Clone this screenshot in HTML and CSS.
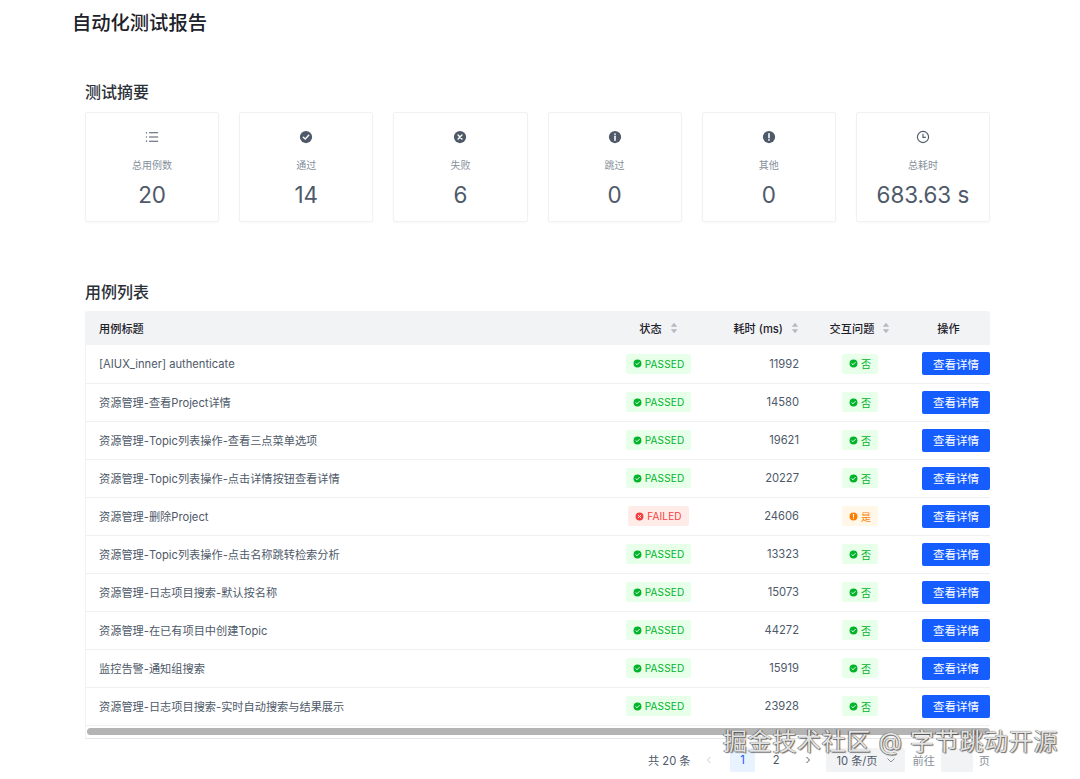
FILE: index.html
```html
<!DOCTYPE html>
<html lang="zh">
<head>
<meta charset="utf-8">
<title>自动化测试报告</title>
<link rel="stylesheet" href="styles.css">
</head>
<body>
<svg class="defs" width="0" height="0" aria-hidden="true">
  <symbol id="i-pass" viewBox="0 0 16 16"><circle cx="8" cy="8" r="7" fill="currentColor"/><path d="M4.9 8.2 7.1 10.3 11.1 6.1" fill="none" stroke="#fff" stroke-width="1.6" stroke-linecap="round" stroke-linejoin="round"/></symbol>
  <symbol id="i-fail" viewBox="0 0 16 16"><circle cx="8" cy="8" r="7" fill="currentColor"/><path d="M5.8 5.8 10.2 10.2M10.2 5.8 5.8 10.2" fill="none" stroke="#fff" stroke-width="1.6" stroke-linecap="round"/></symbol>
  <symbol id="i-warn" viewBox="0 0 16 16"><circle cx="8" cy="8" r="7" fill="currentColor"/><path d="M8 4.2V8.8" fill="none" stroke="#fff" stroke-width="1.8" stroke-linecap="round"/><circle cx="8" cy="11.3" r="1" fill="#fff"/></symbol>
  <symbol id="i-info" viewBox="0 0 16 16"><circle cx="8" cy="8" r="7" fill="currentColor"/><path d="M8 7.2V11.6" fill="none" stroke="#fff" stroke-width="1.8" stroke-linecap="round"/><circle cx="8" cy="4.7" r="1" fill="#fff"/></symbol>
  <symbol id="i-list" viewBox="0 0 16 16"><path d="M4.6 3.2H15M4.6 8H15M4.6 12.8H15" fill="none" stroke="currentColor" stroke-width="1.2"/><path d="M1 3.2H2.4M1 8H2.4M1 12.8H2.4" fill="none" stroke="currentColor" stroke-width="1.4"/></symbol>
  <symbol id="i-clock" viewBox="0 0 16 16"><circle cx="8" cy="8" r="6.4" fill="none" stroke="currentColor" stroke-width="1.3"/><path d="M8 4.4V8.4H11.2" fill="none" stroke="currentColor" stroke-width="1.3"/></symbol>
  <symbol id="i-sort" viewBox="0 0 8 12"><path d="M4 .8 7.2 4.8H.8ZM4 11.2 .8 7.2H7.2Z" fill="currentColor"/></symbol>
</svg>

<main class="page">
  <h1 class="page-title">自动化测试报告</h1>

  <section class="section summary">
    <h2 class="section-title">测试摘要</h2>
    <div class="cards">
      <div class="card"><svg class="card-icon"><use href="#i-list"/></svg><div class="card-label">总用例数</div><div class="card-value">20</div></div>
      <div class="card"><svg class="card-icon"><use href="#i-pass"/></svg><div class="card-label">通过</div><div class="card-value">14</div></div>
      <div class="card"><svg class="card-icon"><use href="#i-fail"/></svg><div class="card-label">失败</div><div class="card-value">6</div></div>
      <div class="card"><svg class="card-icon"><use href="#i-info"/></svg><div class="card-label">跳过</div><div class="card-value">0</div></div>
      <div class="card"><svg class="card-icon"><use href="#i-warn"/></svg><div class="card-label">其他</div><div class="card-value">0</div></div>
      <div class="card"><svg class="card-icon"><use href="#i-clock"/></svg><div class="card-label">总耗时</div><div class="card-value">683.63 s</div></div>
    </div>
  </section>

  <section class="section cases">
    <h2 class="section-title">用例列表</h2>
    <div class="table-wrap">
      <table class="table">
        <colgroup><col class="c-title"><col class="c-status"><col class="c-time"><col class="c-inter"><col class="c-op"></colgroup>
        <thead>
          <tr>
            <th class="left">用例标题</th>
            <th><span class="th-in">状态<svg class="sort"><use href="#i-sort"/></svg></span></th>
            <th class="right"><span class="th-in">耗时 (ms)<svg class="sort"><use href="#i-sort"/></svg></span></th>
            <th><span class="th-in">交互问题<svg class="sort"><use href="#i-sort"/></svg></span></th>
            <th>操作</th>
          </tr>
        </thead>
        <tbody>
          <tr><td class="left">[AIUX_inner] authenticate</td><td><span class="tag ok"><svg class="tag-icon"><use href="#i-pass"/></svg>PASSED</span></td><td class="right">11992</td><td><span class="tag ok"><svg class="tag-icon"><use href="#i-pass"/></svg>否</span></td><td class="op"><button class="btn">查看详情</button></td></tr>
          <tr><td class="left">资源管理-查看Project详情</td><td><span class="tag ok"><svg class="tag-icon"><use href="#i-pass"/></svg>PASSED</span></td><td class="right">14580</td><td><span class="tag ok"><svg class="tag-icon"><use href="#i-pass"/></svg>否</span></td><td class="op"><button class="btn">查看详情</button></td></tr>
          <tr><td class="left">资源管理-Topic列表操作-查看三点菜单选项</td><td><span class="tag ok"><svg class="tag-icon"><use href="#i-pass"/></svg>PASSED</span></td><td class="right">19621</td><td><span class="tag ok"><svg class="tag-icon"><use href="#i-pass"/></svg>否</span></td><td class="op"><button class="btn">查看详情</button></td></tr>
          <tr><td class="left">资源管理-Topic列表操作-点击详情按钮查看详情</td><td><span class="tag ok"><svg class="tag-icon"><use href="#i-pass"/></svg>PASSED</span></td><td class="right">20227</td><td><span class="tag ok"><svg class="tag-icon"><use href="#i-pass"/></svg>否</span></td><td class="op"><button class="btn">查看详情</button></td></tr>
          <tr><td class="left">资源管理-删除Project</td><td><span class="tag bad"><svg class="tag-icon"><use href="#i-fail"/></svg>FAILED</span></td><td class="right">24606</td><td><span class="tag warn"><svg class="tag-icon"><use href="#i-warn"/></svg>是</span></td><td class="op"><button class="btn">查看详情</button></td></tr>
          <tr><td class="left">资源管理-Topic列表操作-点击名称跳转检索分析</td><td><span class="tag ok"><svg class="tag-icon"><use href="#i-pass"/></svg>PASSED</span></td><td class="right">13323</td><td><span class="tag ok"><svg class="tag-icon"><use href="#i-pass"/></svg>否</span></td><td class="op"><button class="btn">查看详情</button></td></tr>
          <tr><td class="left">资源管理-日志项目搜索-默认按名称</td><td><span class="tag ok"><svg class="tag-icon"><use href="#i-pass"/></svg>PASSED</span></td><td class="right">15073</td><td><span class="tag ok"><svg class="tag-icon"><use href="#i-pass"/></svg>否</span></td><td class="op"><button class="btn">查看详情</button></td></tr>
          <tr><td class="left">资源管理-在已有项目中创建Topic</td><td><span class="tag ok"><svg class="tag-icon"><use href="#i-pass"/></svg>PASSED</span></td><td class="right">44272</td><td><span class="tag ok"><svg class="tag-icon"><use href="#i-pass"/></svg>否</span></td><td class="op"><button class="btn">查看详情</button></td></tr>
          <tr><td class="left">监控告警-通知组搜索</td><td><span class="tag ok"><svg class="tag-icon"><use href="#i-pass"/></svg>PASSED</span></td><td class="right">15919</td><td><span class="tag ok"><svg class="tag-icon"><use href="#i-pass"/></svg>否</span></td><td class="op"><button class="btn">查看详情</button></td></tr>
          <tr><td class="left">资源管理-日志项目搜索-实时自动搜索与结果展示</td><td><span class="tag ok"><svg class="tag-icon"><use href="#i-pass"/></svg>PASSED</span></td><td class="right">23928</td><td><span class="tag ok"><svg class="tag-icon"><use href="#i-pass"/></svg>否</span></td><td class="op"><button class="btn">查看详情</button></td></tr>
        </tbody>
      </table>
      <div class="scrollbar"><div class="thumb"></div></div>
    </div>
    <nav class="pager">
      <span class="pg-total">共 20 条</span>
      <span class="pg-arrow pg-prev"><svg class="chev" viewBox="0 0 10 10"><path d="M6.5 2 3.5 5 6.5 8"/></svg></span>
      <span class="pg-num active">1</span>
      <span class="pg-num">2</span>
      <span class="pg-arrow pg-next"><svg class="chev" viewBox="0 0 10 10"><path d="M3.5 2 6.5 5 3.5 8"/></svg></span>
      <span class="pg-select">10 条/页<svg class="chev chev-down" viewBox="0 0 10 10"><path d="M1.5 3.5 5 7 8.5 3.5"/></svg></span>
      <span class="pg-jump">前往</span>
      <span class="pg-input"></span>
      <span class="pg-unit">页</span>
    </nav>
  </section>
</main>
<div class="watermark">掘金技术社区 @ 字节跳动开源</div>
</body>
</html>
```

FILE: styles.css
```css
* { box-sizing: border-box; }
html, body { margin: 0; padding: 0; }
body {
  width: 1080px;
  height: 779px;
  overflow: hidden;
  position: relative;
  background: #fff;
  color: #1d2129;
  font-family: Inter, "Noto Sans CJK SC", sans-serif;
}
.defs { position: absolute; }
.page { padding: 11px 90px 0 72px; }
.page-title {
  margin: 0;
  font-size: 19.3px;
  line-height: 24px;
  font-weight: 500;
  color: #1d2129;
}
.section { padding-left: 13px; }
.summary { margin-top: 46px; }
.cases { margin-top: 59px; }
.section-title {
  margin: 0;
  font-size: 16px;
  line-height: 22px;
  font-weight: 500;
  color: #2b3038;
}
.cards {
  margin-top: 9px;
  display: grid;
  grid-template-columns: repeat(6, 1fr);
  gap: 20px;
}
.card {
  height: 110px;
  border: 1px solid #f0f1f3;
  border-radius: 2px;
  box-shadow: 0 1px 2px rgba(0, 0, 0, .03);
  display: flex;
  flex-direction: column;
  align-items: center;
  padding-top: 17px;
  color: #4e5969;
}
.card-icon { width: 14px; height: 14px; color: #4e5969; }
.card-label {
  margin-top: 13px;
  font-size: 10px;
  line-height: 16px;
  color: #86909c;
}
.card-value {
  margin-top: 7px;
  font-size: 22.4px;
  line-height: 30px;
  color: #4e5969;
}
.table-wrap {
  margin-top: 8px;
  border-bottom: 1px solid #e5e6eb;
  border-left: 1px solid #f2f3f5;
  height: 428px;
}
.table {
  width: 905px;
  margin-left: -1px;
  border-collapse: collapse;
  table-layout: fixed;
  font-size: 11.2px;
}
.c-title { width: 538px; }
.c-status { width: 71px; }
.c-time { width: 119px; }
.c-inter { width: 94px; }
.c-op { width: 83px; }
th {
  height: 34px;
  padding: 0;
  background: #f2f3f5;
  font-weight: 500;
  font-size: 11.2px;
  color: #1d2129;
  text-align: center;
}
th:first-child { border-top-left-radius: 4px; }
th:last-child { border-top-right-radius: 4px; }
td {
  height: 38px;
  padding: 0;
  border-bottom: 1px solid #eff0f2;
  text-align: center;
  color: #4e5969;
}
.left { text-align: left; padding-left: 14px; }
.right { text-align: right; padding-right: 14px; }
.th-in { display: inline-flex; align-items: center; }
.sort { width: 8px; height: 12px; margin-left: 8px; color: #b4b9c1; }
.tag {
  display: inline-flex;
  align-items: center;
  height: 20px;
  padding: 0 7px;
  border-radius: 2px;
  font-size: 10px;
  letter-spacing: .15px;
  vertical-align: middle;
}
.tag-icon { width: 9px; height: 9px; margin-right: 3px; }
.ok { background: #e8ffea; color: #00b42a; }
.bad { background: #ffece8; color: #f53f3f; }
.warn { background: #fff7e8; color: #ff7d00; }
.op { text-align: left; padding-left: 15px; }
.btn {
  display: block;
  width: 68px;
  height: 23px;
  padding: 0;
  border: 0;
  border-radius: 2px;
  background: #165dff;
  color: #fff;
  font: 11.5px Inter, "Noto Sans CJK SC", sans-serif;
}
.scrollbar {
  margin-top: 2px;
  height: 7px;
  padding-left: 1px;
}
.thumb {
  width: 903px;
  height: 7px;
  border-radius: 4px;
  background: #b4b4b4;
}
.pager {
  margin-top: 9px;
  display: flex;
  align-items: center;
  height: 24px;
  font-size: 11.2px;
  color: #4e5969;
  padding-left: 563px;
}
.pg-total { width: 45px; white-space: nowrap; }
.pg-arrow { width: 20px; display: flex; justify-content: center; }
.pg-prev { margin-left: 7px; margin-right: 11px; color: #c9cdd4; }
.pg-next { margin-left: 0; margin-right: 9px; color: #4e5969; }
.chev { width: 10px; height: 10px; fill: none; stroke: currentColor; stroke-width: 1; }
.pg-num { width: 25px; height: 24px; line-height: 24px; text-align: center; border-radius: 2px; margin-right: 9px; }
.active { background: #e8f3ff; color: #165dff; }
.pg-select {
  width: 79px;
  height: 24px;
  background: #f2f3f5;
  border-radius: 2px;
  display: flex;
  align-items: center;
  padding-left: 10px;
  white-space: nowrap;
}
.chev-down { margin-left: 8px; color: #86909c; }
.pg-jump { margin-left: 8px; width: 29px; color: #86909c; white-space: nowrap; }
.pg-input { width: 32px; height: 24px; background: #f2f3f5; border-radius: 2px; }
.pg-unit { margin-left: 6px; color: #86909c; }
.watermark {
  position: absolute;
  left: 723px;
  top: 726px;
  font-size: 24px;
  line-height: 32px;
  letter-spacing: .7px;
  white-space: nowrap;
  color: rgba(255, 255, 255, .85);
  text-shadow: 0 0 1px #444, 1px 1px 1px rgba(0, 0, 0, .55), -1px 0 0 rgba(0, 0, 0, .35);
}
```
